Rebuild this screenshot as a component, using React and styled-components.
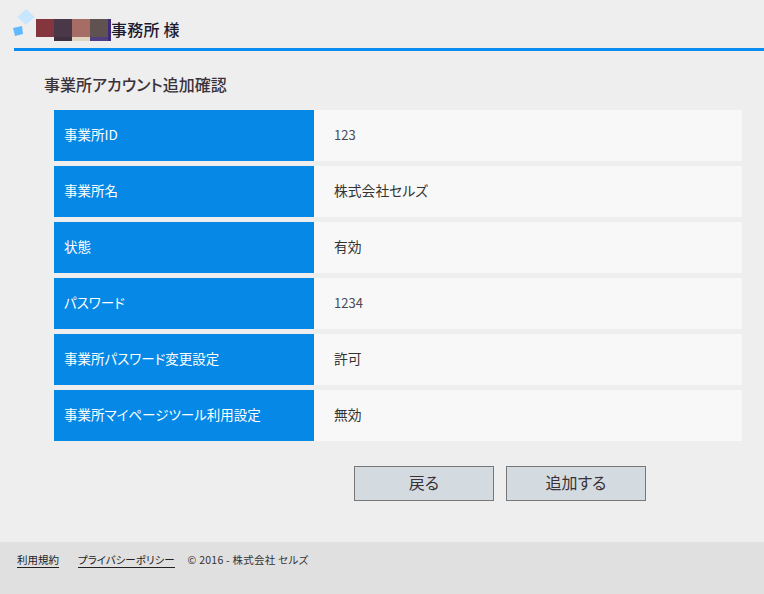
import React from 'react';
import styled, { createGlobalStyle } from 'styled-components';

const Global = createGlobalStyle`
html, body {
  margin: 0;
  padding: 0;
  background: #eeeeee;
  font-family: "Noto Sans CJK JP", "Noto Sans", sans-serif;
  font-feature-settings: "palt";
  color: #333;
}
`;

const Page = styled.div`
width: 764px;
height: 594px;
display: flex;
flex-direction: column;
overflow: hidden;
`;

const Header = styled.header`
height: 39px;
margin-left: 14px;
padding-top: 9px;
display: flex;
align-items: flex-start;
border-bottom: 3px solid #0a8cf0;
`;

const Logo = styled.svg`
width: 22px;
height: 28px;
flex: none;
overflow: visible;
`;

const Mosaic = styled.div`
display: flex;
margin-top: 10px;
height: 22px;
`;

const Tile = styled.span`
width: ${p => p.$w || 18}px;
height: 22px;
background: ${p => p.$bg};
`;

const ClientName = styled.h1`
margin: 9px 0 0 0;
font-size: 16px;
line-height: 22px;
font-weight: 500;
letter-spacing: 0.2px;
color: #1d1a2e;
`;

const Main = styled.main`
flex: 1;
padding: 22px 22px 0 44px;
`;

const Title = styled.h2`
margin: 0;
font-size: 16px;
line-height: 22px;
font-weight: 500;
color: #3a3238;
`;

const Table = styled.div`
margin: 15px 0 0 10px;
display: flex;
flex-direction: column;
gap: 5px;
`;

const Row = styled.div`
display: grid;
grid-template-columns: 260px 1fr;
height: 51px;
`;

const Label = styled.div`
background: #0588e6;
color: #fff;
font-size: 13.5px;
display: flex;
align-items: center;
padding: 0 0 3px 10px;
`;

const Value = styled.div`
background: #f8f8f8;
color: ${p => (p.$num ? '#4a4a55' : '#333')};
font-size: ${p => (p.$num ? 13 : 13.8)}px;
display: flex;
align-items: center;
padding: 0 0 3px 20px;
`;

const Actions = styled.div`
display: flex;
gap: 12px;
margin: 25px 0 0 310px;
`;

const Button = styled.button`
width: 140px;
height: 35px;
box-sizing: border-box;
padding: 0 0 4px;
background: #d3dbe1;
border: 1px solid #777;
border-radius: 0;
color: #3a3238;
font-family: inherit;
font-feature-settings: inherit;
font-size: 16px;
`;

const Footer = styled.footer`
height: 52px;
background: #e0e0e0;
display: flex;
align-items: flex-start;
padding: 10px 0 0 17px;
box-sizing: border-box;
font-size: 10.5px;
line-height: 15px;
color: #333;
`;

const FootLink = styled.a`
color: #222;
text-decoration: none;
border-bottom: 1px solid #222;
margin-right: ${p => p.$gap}px;
`;

const Copyright = styled.span`
letter-spacing: 0.25px;
`;

const rows = [
  ['事業所ID', '123', true],
  ['事業所名', '株式会社セルズ'],
  ['状態', '有効'],
  ['パスワード', '1234', true],
  ['事業所パスワード変更設定', '許可'],
  ['事業所マイページツール利用設定', '無効'],
];

export default function App() {
  return (
    <Page>
      <Global />
      <Header>
        <Logo viewBox="0 0 22 28">
          <polygon points="12,0 20.7,8 12,16 3.3,8" fill="#c9e6ff" />
          <polygon points="-1,19 8,17 9,25 1,27" fill="#62b9ff" />
        </Logo>
        <Mosaic>
          <Tile $bg="linear-gradient(#85353e 18px, #eeeeee 18px)" />
          <Tile $bg="linear-gradient(#4a3848 18px, #40303f 18px)" />
          <Tile $bg="linear-gradient(#a56d66 18px, #e0d4c0 18px)" />
          <Tile $bg="linear-gradient(#5f5250 18px, #4f3f80 18px)" />
          <Tile $w={3} $bg="#3d2a7a" />
        </Mosaic>
        <ClientName>事務所 様</ClientName>
      </Header>
      <Main>
        <Title>事業所アカウント追加確認</Title>
        <Table>
          {rows.map(([k, v, num]) => (
            <Row key={k}>
              <Label>{k}</Label>
              <Value $num={num}>{v}</Value>
            </Row>
          ))}
        </Table>
        <Actions>
          <Button>戻る</Button>
          <Button>追加する</Button>
        </Actions>
      </Main>
      <Footer>
        <FootLink $gap={19}>利用規約</FootLink>
        <FootLink $gap={13}>プライバシーポリシー</FootLink>
        <Copyright>© 2016 - 株式会社 セルズ</Copyright>
      </Footer>
    </Page>
  );
}
